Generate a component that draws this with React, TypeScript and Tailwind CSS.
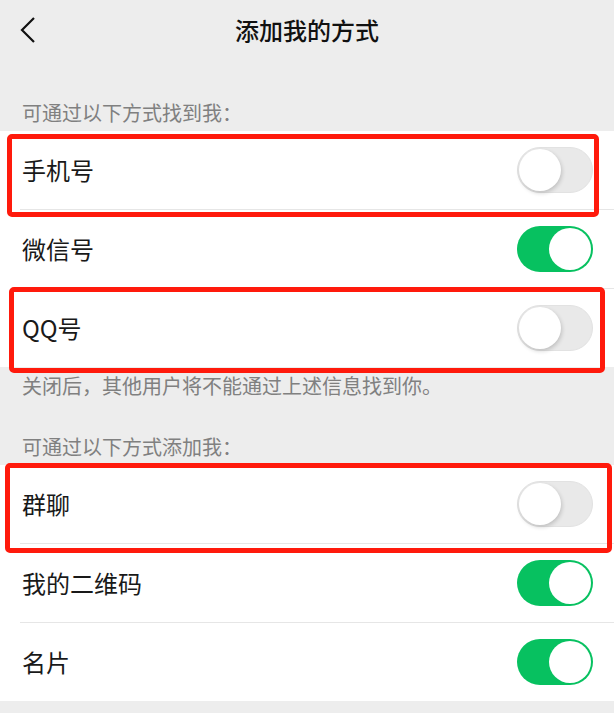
type Item = { label: string; on: boolean };

const findMe: Item[] = [
  { label: "手机号", on: false },
  { label: "微信号", on: true },
  { label: "QQ号", on: false },
];

const addMe: Item[] = [
  { label: "群聊", on: false },
  { label: "我的二维码", on: true },
  { label: "名片", on: true },
];

const Toggle = ({ on }: { on: boolean }) => {
  return (
    <div
      className={
        on
          ? "relative w-[76px] h-[46px] rounded-full bg-[#07c160]"
          : "relative w-[76px] h-[46px] rounded-full bg-[#e9e9e9] border border-[#e2e2e2]"
      }
    >
      <div
        className={
          on
            ? "absolute top-[2px] right-[2px] w-[42px] h-[42px] rounded-full bg-white"
            : "absolute top-[1px] left-[1px] w-[42px] h-[42px] rounded-full bg-white shadow-[1px_2px_4px_rgba(0,0,0,0.18)]"
        }
      />
    </div>
  );
};

const Group = ({ items }: { items: Item[] }) => {
  return (
    <div className="bg-white">
      {items.map((item, i) => (
        <div key={item.label} className="pl-[20px]">
          <div
            className={
              i < items.length - 1
                ? "h-[79px] flex items-center justify-between pl-[2px] pr-[21px] border-b border-[#e6e6e6]"
                : "h-[78px] flex items-center justify-between pl-[2px] pr-[21px]"
            }
          >
            <span className="text-[24px] text-[#191919]">{item.label}</span>
            <Toggle on={item.on} />
          </div>
        </div>
      ))}
    </div>
  );
};

// red outlines drawn over the highlighted rows
const Mark = ({ className }: { className: string }) => (
  <div
    className={`absolute border-[5px] border-[#ff1a0c] rounded-[5px] pointer-events-none ${className}`}
  />
);

const App = () => {
  return (
    <div
      className="relative w-[614px] min-h-[713px] bg-[#ededed] overflow-hidden"
      style={{ fontFamily: '"Noto Sans CJK SC", "Noto Sans", sans-serif' }}
    >
      {/* Header */}
      <header className="h-[60px] grid grid-cols-[80px_1fr_80px] items-center">
        <svg width="40" height="30" viewBox="0 0 40 30" className="ml-[18px]">
          <polyline
            points="16,3 4,15 16,27"
            fill="none"
            stroke="#111"
            strokeWidth="2.2"
          />
        </svg>
        <h1 className="text-center text-[24px] font-medium text-[#111]">
          添加我的方式
        </h1>
        <div />
      </header>

      <div className="h-[71px] flex items-end pl-[22px] pb-[5px]">
        <p className="text-[20px] leading-[26px] text-[#808080]">
          可通过以下方式找到我：
        </p>
      </div>

      <Group items={findMe} />

      <p className="pl-[22px] pt-[6px] text-[20px] leading-[26px] text-[#808080]">
        关闭后，其他用户将不能通过上述信息找到你。
      </p>

      <div className="h-[66px] flex items-end pl-[22px] pb-[5px]">
        <p className="text-[20px] leading-[26px] text-[#808080]">
          可通过以下方式添加我：
        </p>
      </div>

      <Group items={addMe} />

      <Mark className="left-[7px] top-[134px] w-[592px] h-[83px]" />
      <Mark className="left-[9px] top-[287px] w-[596px] h-[86px]" />
      <Mark className="left-[5px] top-[463px] w-[607px] h-[90px]" />
    </div>
  );
};

export default App;
